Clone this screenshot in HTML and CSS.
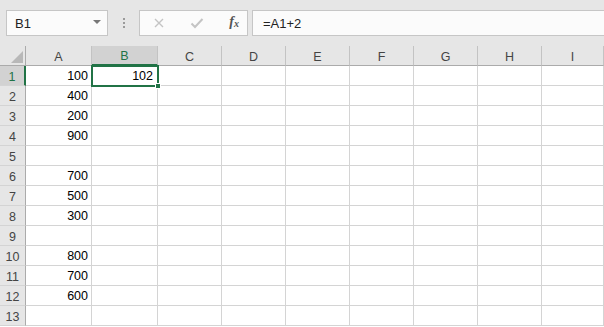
FILE: index.html
```
<!DOCTYPE html>
<html lang="en">
<head>
    <meta charset="UTF-8">
    <title>Excel - Formula</title>
    <link rel="stylesheet" href="styles.css">
</head>
<body>
    <div class="formula-bar">
        <div class="name-box">
            <span>B1</span>
            <span class="caret"></span>
        </div>
        <div class="grip"><i></i><i></i><i></i></div>
        <div class="fx-box">
            <svg class="icon" width="12" height="12" viewBox="0 0 12 12"><path d="M2 2 L10 10 M10 2 L2 10" stroke="#c4c4c4" stroke-width="1.4" fill="none"/></svg>
            <svg class="icon" width="14" height="12" viewBox="0 0 14 12"><path d="M1.5 6.5 L5 10 L12.5 2" stroke="#c4c4c4" stroke-width="2" fill="none"/></svg>
            <span class="fx">f<sub>x</sub></span>
        </div>
        <div class="formula-box">=A1+2</div>
    </div>

    <div class="sheet">
        <div class="corner"><span class="tri"></span></div>
        <div class="col-head">A</div>
        <div class="col-head active">B</div>
        <div class="col-head">C</div>
        <div class="col-head">D</div>
        <div class="col-head">E</div>
        <div class="col-head">F</div>
        <div class="col-head">G</div>
        <div class="col-head">H</div>
        <div class="col-head">I</div>

        <div class="row-head active">1</div>
        <div class="cell">100</div><div class="cell selected">102<span class="handle"></span></div><div class="cell"></div><div class="cell"></div><div class="cell"></div><div class="cell"></div><div class="cell"></div><div class="cell"></div><div class="cell"></div>
        <div class="row-head">2</div>
        <div class="cell">400</div><div class="cell"></div><div class="cell"></div><div class="cell"></div><div class="cell"></div><div class="cell"></div><div class="cell"></div><div class="cell"></div><div class="cell"></div>
        <div class="row-head">3</div>
        <div class="cell">200</div><div class="cell"></div><div class="cell"></div><div class="cell"></div><div class="cell"></div><div class="cell"></div><div class="cell"></div><div class="cell"></div><div class="cell"></div>
        <div class="row-head">4</div>
        <div class="cell">900</div><div class="cell"></div><div class="cell"></div><div class="cell"></div><div class="cell"></div><div class="cell"></div><div class="cell"></div><div class="cell"></div><div class="cell"></div>
        <div class="row-head">5</div>
        <div class="cell"></div><div class="cell"></div><div class="cell"></div><div class="cell"></div><div class="cell"></div><div class="cell"></div><div class="cell"></div><div class="cell"></div><div class="cell"></div>
        <div class="row-head">6</div>
        <div class="cell">700</div><div class="cell"></div><div class="cell"></div><div class="cell"></div><div class="cell"></div><div class="cell"></div><div class="cell"></div><div class="cell"></div><div class="cell"></div>
        <div class="row-head">7</div>
        <div class="cell">500</div><div class="cell"></div><div class="cell"></div><div class="cell"></div><div class="cell"></div><div class="cell"></div><div class="cell"></div><div class="cell"></div><div class="cell"></div>
        <div class="row-head">8</div>
        <div class="cell">300</div><div class="cell"></div><div class="cell"></div><div class="cell"></div><div class="cell"></div><div class="cell"></div><div class="cell"></div><div class="cell"></div><div class="cell"></div>
        <div class="row-head">9</div>
        <div class="cell"></div><div class="cell"></div><div class="cell"></div><div class="cell"></div><div class="cell"></div><div class="cell"></div><div class="cell"></div><div class="cell"></div><div class="cell"></div>
        <div class="row-head">10</div>
        <div class="cell">800</div><div class="cell"></div><div class="cell"></div><div class="cell"></div><div class="cell"></div><div class="cell"></div><div class="cell"></div><div class="cell"></div><div class="cell"></div>
        <div class="row-head">11</div>
        <div class="cell">700</div><div class="cell"></div><div class="cell"></div><div class="cell"></div><div class="cell"></div><div class="cell"></div><div class="cell"></div><div class="cell"></div><div class="cell"></div>
        <div class="row-head">12</div>
        <div class="cell">600</div><div class="cell"></div><div class="cell"></div><div class="cell"></div><div class="cell"></div><div class="cell"></div><div class="cell"></div><div class="cell"></div><div class="cell"></div>
        <div class="row-head">13</div>
        <div class="cell"></div><div class="cell"></div><div class="cell"></div><div class="cell"></div><div class="cell"></div><div class="cell"></div><div class="cell"></div><div class="cell"></div><div class="cell"></div>
    </div>
</body>
</html>
```

FILE: styles.css
```
:root {
    --chrome: #e6e6e6;
    --grid-line: #d4d4d4;
    --head-line: #ababab;
    --green: #217346;
    --head-text: #444;
}

* {
    margin: 0;
    padding: 0;
    box-sizing: border-box;
}

body {
    width: 604px;
    height: 327px;
    overflow: hidden;
    background: #fff;
    font-family: 'Liberation Sans', Arial, sans-serif;
    color: #000;
}

/* formula bar */
.formula-bar {
    height: 46px;
    background-color: var(--chrome);
    display: flex;
    align-items: flex-start;
    padding: 10px 0 0 6px;
}

.name-box,
.fx-box,
.formula-box {
    height: 26px;
    background-color: #fbfbfb;
    border: 1px solid #c6c6c6;
    display: flex;
    align-items: center;
    font-size: 13px;
    color: #222;
}

.name-box {
    width: 102px;
    padding: 0 6px 0 8px;
    justify-content: space-between;
}

.caret {
    width: 0;
    height: 0;
    border-left: 4px solid transparent;
    border-right: 4px solid transparent;
    border-top: 4px solid #777;
    margin-top: -2px;
}

.grip {
    width: 31px;
    height: 26px;
    display: flex;
    flex-direction: column;
    align-items: center;
    justify-content: center;
    gap: 2px;
}

.grip i {
    width: 2px;
    height: 2px;
    background-color: #9a9a9a;
}

.fx-box {
    width: 109px;
    padding: 0 8px 0 13px;
    justify-content: space-between;
}

.fx {
    font-family: 'Liberation Serif', 'Times New Roman', serif;
    font-style: italic;
    font-weight: bold;
    font-size: 14px;
    color: #555;
    margin-top: -3px;
}

.fx sub {
    font-size: 10px;
    vertical-align: -1px;
}

.formula-box {
    flex: 1;
    margin-left: 4px;
    padding-left: 10px;
    border-right: none;
}

/* sheet grid */
.sheet {
    display: grid;
    grid-template-columns: 26px 66px 66px repeat(6, 64px) 1fr;
    grid-auto-rows: 20px;
    font-size: 12.5px;
}

.corner,
.col-head,
.row-head {
    background-color: var(--chrome);
    color: var(--head-text);
    font-size: 12.5px;
    display: flex;
    align-items: center;
    justify-content: center;
}

.corner {
    position: relative;
    border-right: 1px solid var(--head-line);
    border-bottom: 1px solid var(--head-line);
}

.corner .tri {
    position: absolute;
    right: 2px;
    bottom: 2px;
    width: 0;
    height: 0;
    border-left: 12px solid transparent;
    border-bottom: 12px solid #b8b8b8;
}

.col-head {
    border-bottom: 1px solid var(--head-line);
    border-right: 1px solid #c3c3c3;
    padding-top: 2px;
}

.col-head.active {
    background-color: #d2d2d2;
    color: var(--green);
    border-bottom: 2px solid var(--green);
}

.row-head {
    border-right: 1px solid var(--head-line);
    border-bottom: 1px solid var(--grid-line);
    padding-top: 2px;
}

.row-head.active {
    background-color: #d2d2d2;
    color: var(--green);
    border-right: 2px solid var(--green);
}

.cell {
    border-right: 1px solid var(--grid-line);
    border-bottom: 1px solid var(--grid-line);
    text-align: right;
    padding: 2px 3px 0 0;
    line-height: 17px;
}

.cell.selected {
    position: relative;
    outline: 2px solid var(--green);
    outline-offset: -1px;
    padding-right: 4px;
}

.handle {
    position: absolute;
    right: -4px;
    bottom: -4px;
    width: 6px;
    height: 6px;
    background-color: var(--green);
    border: 1px solid #fff;
}
```
